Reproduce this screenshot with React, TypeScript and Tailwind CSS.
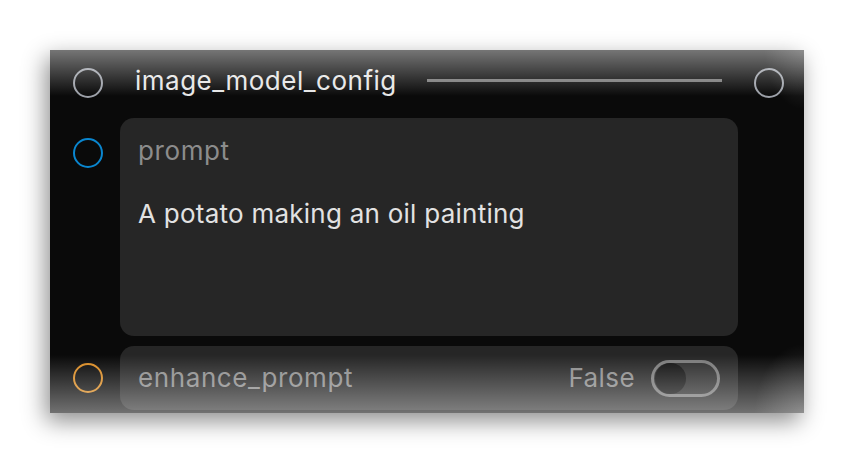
import React from "react";

function Port({ color }: { color: string }) {
  return (
    <div
      className="w-[30px] h-[30px] rounded-full border-[2.5px] shrink-0"
      style={{ borderColor: color }}
    />
  );
}

export default function App() {
  return (
    <div
      className="w-[854px] h-[464px] bg-white pt-[50px] pl-[50px]"
      style={{ fontFamily: "Inter, 'Noto Sans', sans-serif" }}
    >
      <div className="relative w-[754px] h-[363px] bg-[#0a0a0a] overflow-hidden shadow-[-4px_8px_22px_rgba(0,0,0,0.45)]">
        {/* header */}
        <div className="flex items-center h-[66px] pl-[23px] pr-[20px]">
          <Port color="#9ca0a8" />
          <div className="ml-[32px] text-[26px] text-[#e6e6e6] leading-none tracking-[0.5px] mt-[-4px]">
            image_model_config
          </div>
          <div className="flex-1 ml-[30px] mr-[32px] h-[3px] bg-[#777] mt-[-6px]" />
          <Port color="#9ca0a8" />
        </div>

        {/* prompt row */}
        <div className="flex items-start mt-[2px] pl-[23px]">
          <div className="mt-[20px]">
            <Port color="#0a86cf" />
          </div>
          <div className="ml-[17px] w-[618px] h-[218px] rounded-[14px] bg-[#262626] px-[18px] pt-[17px]">
            <div className="text-[26px] leading-[32px] text-[#8c8c8c] tracking-[0.6px]">prompt</div>
            <div className="mt-[31px] text-[26px] leading-[32px] text-[#e2e2e2] tracking-[0.25px]">
              A potato making an oil painting
            </div>
          </div>
        </div>

        {/* enhance row */}
        <div className="flex items-center mt-[10px] pl-[23px]">
          <Port color="#d98a22" />
          <div className="ml-[17px] w-[618px] h-[64px] rounded-[14px] bg-[#262626] pl-[18px] pr-[18px] flex items-center">
            <div className="text-[26px] leading-[32px] text-[#8c8c8c] tracking-[0.6px]">enhance_prompt</div>
            <div className="flex-1" />
            <div className="text-[26px] leading-[32px] text-[#8c8c8c] tracking-[0.4px]">False</div>
            <div className="ml-[16px] w-[69px] h-[37px] rounded-full border-[3px] border-[#7a7a7a] bg-[#2e2e2e] flex items-center pl-[1px]">
              <div className="w-[31px] h-[31px] rounded-full bg-[#121212]" />
            </div>
          </div>
        </div>

        {/* fades */}
        <div className="pointer-events-none absolute left-0 right-0 top-0 h-[46px] bg-gradient-to-b from-[rgba(255,255,255,0.44)] to-transparent" />
        <div className="pointer-events-none absolute left-0 right-0 bottom-0 h-[58px] bg-gradient-to-t from-[rgba(255,255,255,0.42)] to-transparent" />
        <div className="pointer-events-none absolute right-0 top-0 w-[40px] h-[60px] bg-[radial-gradient(ellipse_at_top_right,rgba(255,255,255,0.18),transparent_70%)]" />
        <div className="pointer-events-none absolute right-0 bottom-0 w-[50px] h-[70px] bg-[radial-gradient(ellipse_at_bottom_right,rgba(255,255,255,0.22),transparent_70%)]" />
      </div>
    </div>
  );
}
